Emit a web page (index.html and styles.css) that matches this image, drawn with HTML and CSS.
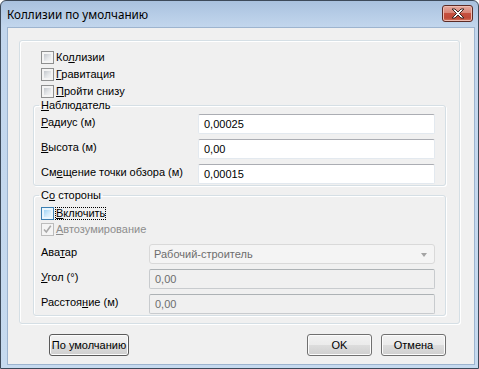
FILE: index.html
```html
<!DOCTYPE html>
<html lang="ru">
<head>
  <meta charset="UTF-8">
  <title>Коллизии по умолчанию</title>
  <link rel="stylesheet" href="styles.css">
</head>
<body>
  <div class="window">
    <div class="titlebar">
      <span class="title">Коллизии по умолчанию</span>
      <div class="close">
        <svg width="14" height="11" viewBox="-1 -1 14 11">
          <polygon points="0,0 3,0 6,3 9,0 12,0 7.5,4.5 12,9 9,9 6,6 3,9 0,9 4.5,4.5" fill="#fff" stroke="#3b2624" stroke-width="1" stroke-linejoin="round"/>
        </svg>
      </div>
    </div>
    <div class="client">
      <div class="panel">
        <div class="check"><span class="box"></span><span class="text">Ко<u>л</u>лизии</span></div>
        <div class="check"><span class="box"></span><span class="text"><u>Г</u>равитация</span></div>
        <div class="check"><span class="box"></span><span class="text"><u>П</u>ройти снизу</span></div>

        <fieldset class="group observer">
          <legend><u>Н</u>аблюдатель</legend>
          <div class="field"><span class="label"><u>Р</u>адиус (м)</span><div class="input">0,00025</div></div>
          <div class="field"><span class="label"><u>В</u>ысота (м)</span><div class="input">0,00</div></div>
          <div class="field"><span class="label">См<u>е</u>щение точки обзора (м)</span><div class="input">0,00015</div></div>
        </fieldset>

        <fieldset class="group side">
          <legend>С<u>о</u> стороны</legend>
          <div class="check"><span class="box hover"></span><span class="text focus"><u>В</u>ключить</span></div>
          <div class="check disabled">
            <span class="box checked">
              <svg width="11" height="11" viewBox="0 0 11 11"><path d="M2 5.5 L4.3 8 L8.8 1.8" fill="none" stroke="#a9a9a9" stroke-width="1.6"/></svg>
            </span>
            <span class="text"><u>А</u>втозумирование</span>
          </div>
          <div class="field first"><span class="label">Ава<u>т</u>ар</span>
            <div class="combo">Рабочий-строитель<span class="arrow"></span></div>
          </div>
          <div class="field"><span class="label"><u>У</u>гол (°)</span><div class="input off">0,00</div></div>
          <div class="field"><span class="label">Расстоя<u>н</u>ие (м)</span><div class="input off">0,00</div></div>
        </fieldset>
      </div>

      <div class="buttons">
        <div class="btn reset">По умолчанию</div>
        <div class="spacer"></div>
        <div class="btn">OK</div>
        <div class="btn">Отмена</div>
      </div>
    </div>
  </div>
</body>
</html>
```

FILE: styles.css
```css
html, body { margin: 0; padding: 0; }
body { width: 479px; height: 369px; overflow: hidden; background: #fff; font-family: "Liberation Sans", Arial, sans-serif; font-size: 11px; color: #000; }

.window { box-sizing: border-box; width: 479px; height: 369px; border: 1px solid #3d4a5a; border-radius: 6px 6px 0 0; padding: 0 3px 3px 6px; display: flex; flex-direction: column; background: linear-gradient(#a9c1de 0, #b7cde7 14px, #c2d6ed 26px, #c6daef 100%); }

.titlebar { height: 26px; display: flex; align-items: flex-start; justify-content: space-between; }
.title { font-family: "Noto Sans", "Open Sans", sans-serif; font-size: 11.7px; line-height: 16px; margin-top: 5px; color: #000; }
.close { box-sizing: border-box; width: 31px; height: 17px; margin: 4px 2px 0 0; border: 1px solid #5b2b26; border-radius: 3px; display: flex; align-items: center; justify-content: center; background: linear-gradient(#e6a99e 0, #d88577 45%, #c6503f 50%, #c04a38 80%, #d77a62 100%); box-shadow: inset 0 0 0 1px #eebcb2; }

.client { flex: 1; border: 1px solid #9db4cf; background: #f0f0f0; }

.panel { width: 441px; box-sizing: border-box; margin: 12px 0 0 11px; padding: 8px 13px 7px 13px; border: 1px solid #d5dfe5; border-radius: 3px; box-shadow: inset 1px 1px 0 #fff, 1px 1px 0 #fff; }

.check { height: 17px; display: flex; align-items: center; padding-left: 8px; }
.check .text { margin-left: 2px; line-height: 13px; }
.check .text.focus { margin-left: 1px; border: 1px dotted #000; line-height: 11px; }
.check.disabled .text { color: #8d8d8d; }
.side .check { height: 16px; padding-left: 0; }

.box { box-sizing: border-box; width: 13px; height: 13px; border: 1px solid #8e8f8f; background: #f4f4f4; position: relative; }
.box::after { content: ""; position: absolute; left: 2px; top: 2px; width: 7px; height: 7px; background: linear-gradient(135deg, #c3c7cc, #e6e8ea 60%, #f4f4f4); }
.box.hover { border-color: #3c7fb1; background: #e9f6fe; }
.box.hover::after { background: linear-gradient(135deg, #9fd5f7, #d3ecfc 60%, #e9f6fe); }
.box.checked { border-color: #bcbcbc; background: #f4f4f4; }
.box.checked::after { display: none; }
.box.checked svg { display: block; margin: 0; }

u { text-decoration: underline; text-underline-offset: 1px; }

.group { margin: -1px 0 0 0; padding: 2px 10px 1px 7px; border: 1px solid #d5dfe5; border-radius: 3px; box-shadow: inset 1px 1px 0 #fff, 1px 1px 0 #fff; }
.group legend { padding: 0 2px; margin-left: -2px; line-height: 13px; }
.group.side { margin-top: 3px; padding-top: 3px; }

.field { display: flex; align-items: flex-start; margin-top: 5px; }
.observer .field:first-of-type { margin-top: 0; }
.field .label { width: 157px; flex: none; line-height: 13px; margin-top: 2px; }
.side .field .label { width: 108px; }
.side .field.first { margin-top: 7px; }

.input { flex: 1; box-sizing: border-box; height: 20px; line-height: 18px; padding: 0 5px; background: #fff; border: 1px solid #e3e9ef; border-top-color: #abadb3; border-radius: 2px; color: #000; }
.input.off { background: #f0f0f0; border-color: #c8cbce; border-top-color: #adb2b5; color: #6d6d6d; }

.combo { flex: 1; position: relative; box-sizing: border-box; height: 20px; line-height: 18px; padding: 0 5px 0 4px; background: #f4f4f4; border: 1px solid #d9d9d9; border-radius: 3px; color: #6d6d6d; }
.combo .arrow { position: absolute; right: 7px; top: 8px; width: 0; height: 0; border-left: 3.5px solid transparent; border-right: 3.5px solid transparent; border-top: 4px solid #a3a3a3; }

.buttons { display: flex; margin: 10px 28px 0 41px; gap: 9px; }
.spacer { flex: 1; }
.btn { box-sizing: border-box; width: 65px; height: 22px; line-height: 20px; text-align: center; border: 1px solid #707070; border-radius: 3px; background: linear-gradient(#f2f2f2 0, #ebebeb 50%, #dddddd 50%, #cfcfcf 100%); box-shadow: inset 0 0 0 1px #fcfcfc; }
.btn.reset { width: 80px; border-color: #5a5a5a; }
```
